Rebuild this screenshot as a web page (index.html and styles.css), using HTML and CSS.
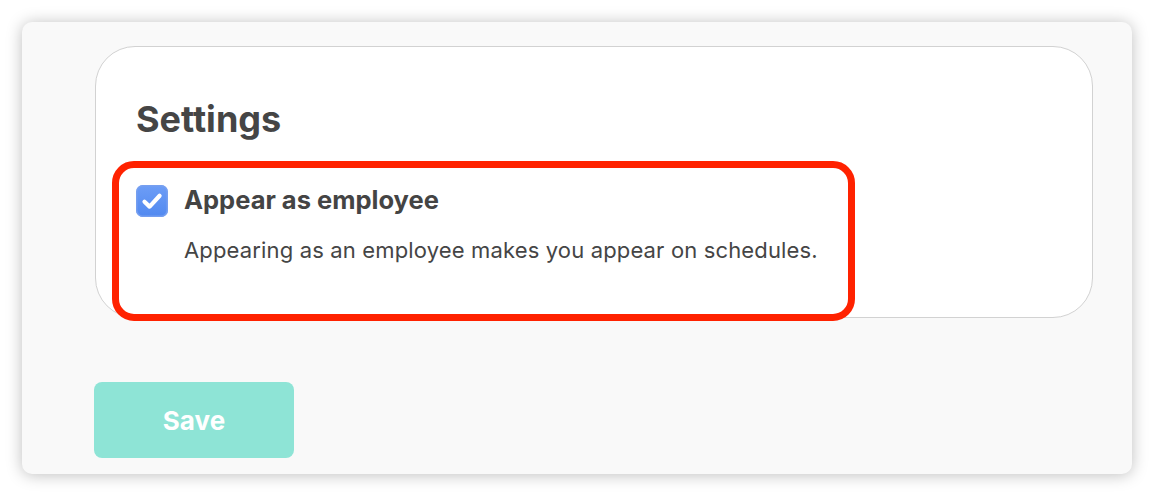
FILE: index.html
```html
<!DOCTYPE html>
<html>
<head>
<meta charset="utf-8">
<link rel="stylesheet" href="styles.css">
</head>
<body>
<div class="panel">
  <section class="card">
    <h1 class="title">Settings</h1>
    <div class="option">
      <span class="checkbox">
        <svg viewBox="0 0 32 32" width="32" height="32"><path d="M8.5 16.8 L13.6 21.6 L23.6 10.8" fill="none" stroke="#fff" stroke-width="4.2" stroke-linecap="round" stroke-linejoin="round"/></svg>
      </span>
      <div class="option-text">
        <div class="option-label">Appear as employee</div>
        <div class="option-desc">Appearing as an employee makes you appear on schedules.</div>
      </div>
    </div>
  </section>
  <button class="save">Save</button>
</div>
<div class="highlight"></div>
</body>
</html>
```
FILE: styles.css
```css
html, body {
  margin: 0;
  padding: 0;
  background: #ffffff;
}
body {
  width: 1154px;
  height: 496px;
  position: relative;
  overflow: hidden;
  font-family: Inter, "Open Sans", sans-serif;
  color: #444444;
}
.panel {
  box-sizing: border-box;
  margin: 22px 0 0 22px;
  width: 1110px;
  height: 452px;
  background: #f9f9f9;
  border-radius: 10px;
  box-shadow: 0 1px 16px rgba(0, 0, 0, 0.26);
  padding: 24px 0 0 73px;
  display: flex;
  flex-direction: column;
  align-items: flex-start;
}
.card {
  box-sizing: border-box;
  width: 998px;
  height: 272px;
  background: #ffffff;
  border: 1.6px solid #d2d2d2;
  border-radius: 40px;
  padding: 50px 0 0 40px;
}
.title {
  margin: 0;
  font-size: 36px;
  line-height: 44px;
  font-weight: 700;
  color: #454545;
}
.option {
  display: flex;
  gap: 16px;
  margin-top: 44px;
}
.checkbox {
  flex: none;
  width: 32px;
  height: 32px;
  border-radius: 7px;
  background: linear-gradient(#6d9df6, #5189f0);
  box-shadow: inset 0 0 0 1.5px rgba(120, 160, 240, 0.9);
}
.checkbox svg { display: block; }
.option-label {
  font-size: 25.5px;
  line-height: 30px;
  font-weight: 700;
  color: #444444;
}
.option-desc {
  font-size: 22px;
  line-height: 26px;
  letter-spacing: 0.15px;
  color: #454545;
  margin-top: 22px;
}
.save {
  margin: 64px 0 0 -1px;
  width: 200px;
  height: 76px;
  border: none;
  border-radius: 8px;
  background: #8ee4d6;
  color: #ffffff;
  font-family: Inter, "Open Sans", sans-serif;
  font-size: 26px;
  font-weight: 700;
  padding: 0;
}
.highlight {
  position: absolute;
  left: 112px;
  top: 161px;
  width: 743px;
  height: 160px;
  box-sizing: border-box;
  border: 7px solid #ff2200;
  border-radius: 22px;
}
```
